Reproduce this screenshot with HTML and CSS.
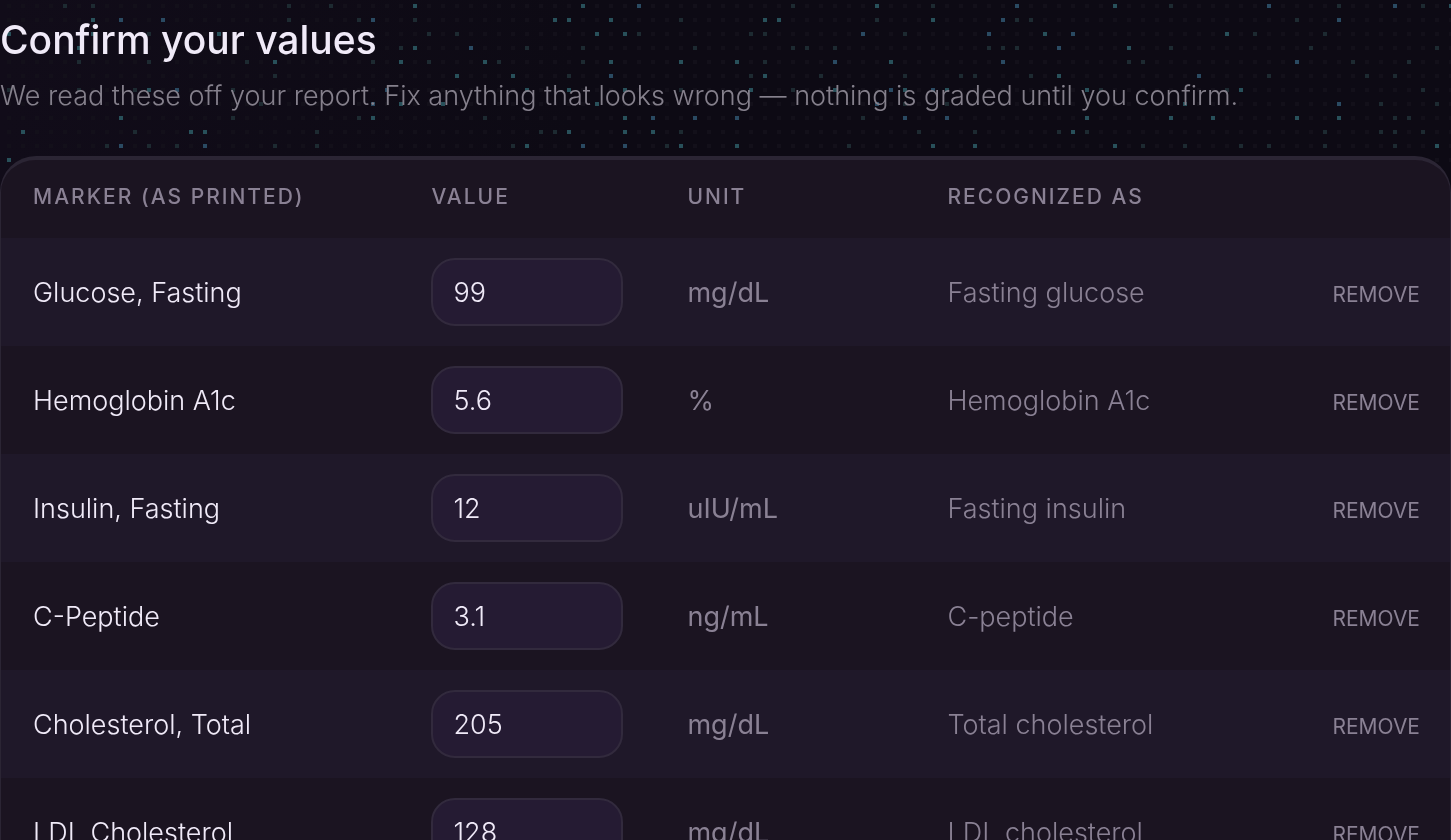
FILE: index.html
```html
<!DOCTYPE html>
<html lang="en">
<head>
    <meta charset="UTF-8">
    <meta name="viewport" content="width=device-width, initial-scale=1.0">
    <title>Confirm your values</title>
    <link rel="stylesheet" href="styles.css">
</head>
<body>
    <canvas class="dots" id="dots" aria-hidden="true"></canvas>

    <main class="page">
        <header class="intro">
            <h1>Confirm your values</h1>
            <p>We read these off your report. Fix anything that looks wrong — nothing is graded until you confirm.</p>
        </header>

        <div class="card">
            <table class="values">
                <thead>
                    <tr>
                        <th class="col-marker" scope="col">Marker (as printed)</th>
                        <th class="col-value" scope="col">Value</th>
                        <th class="col-unit" scope="col">Unit</th>
                        <th scope="col">Recognized as</th>
                        <td class="col-action"></td>
                    </tr>
                </thead>
                <tbody>
                    <tr>
                        <td><label for="glucose">Glucose, Fasting</label></td>
                        <td><input type="text" id="glucose" value="99"></td>
                        <td class="unit">mg/dL</td>
                        <td class="known">Fasting glucose</td>
                        <td class="action"><button type="button">Remove</button></td>
                    </tr>
                    <tr>
                        <td><label for="a1c">Hemoglobin A1c</label></td>
                        <td><input type="text" id="a1c" value="5.6"></td>
                        <td class="unit">%</td>
                        <td class="known">Hemoglobin A1c</td>
                        <td class="action"><button type="button">Remove</button></td>
                    </tr>
                    <tr>
                        <td><label for="insulin">Insulin, Fasting</label></td>
                        <td><input type="text" id="insulin" value="12"></td>
                        <td class="unit">uIU/mL</td>
                        <td class="known">Fasting insulin</td>
                        <td class="action"><button type="button">Remove</button></td>
                    </tr>
                    <tr>
                        <td><label for="cpeptide">C-Peptide</label></td>
                        <td><input type="text" id="cpeptide" value="3.1"></td>
                        <td class="unit">ng/mL</td>
                        <td class="known">C-peptide</td>
                        <td class="action"><button type="button">Remove</button></td>
                    </tr>
                    <tr>
                        <td><label for="cholesterol">Cholesterol, Total</label></td>
                        <td><input type="text" id="cholesterol" value="205"></td>
                        <td class="unit">mg/dL</td>
                        <td class="known">Total cholesterol</td>
                        <td class="action"><button type="button">Remove</button></td>
                    </tr>
                    <tr>
                        <td><label for="ldl">LDL Cholesterol</label></td>
                        <td><input type="text" id="ldl" value="128"></td>
                        <td class="unit">mg/dL</td>
                        <td class="known">LDL cholesterol</td>
                        <td class="action"><button type="button">Remove</button></td>
                    </tr>
                </tbody>
            </table>
        </div>
    </main>

    <script src="script.js"></script>
</body>
</html>
```

FILE: styles.css
```css
* {
    box-sizing: border-box;
}
body {
    margin: 0;
    background: linear-gradient(90deg, #110c19, #0d0a14 40%);
    color: #f0eaf8;
    font-family: Inter, sans-serif;
    font-size: 27px;
    font-weight: 300;
}
.dots {
    position: absolute;
    top: 0;
    left: 0;
    z-index: -1;
}
.page {
    height: 100vh;
    overflow: hidden;
}
.intro {
    padding: 16px 0 40px;
}
h1 {
    margin: 0;
    font-size: 39px;
    font-weight: 500;
    line-height: 48px;
}
.intro p {
    margin: 12px 0 0;
    color: #85808c;
    line-height: 40px;
}
.card {
    border: 1px solid #2b2534;
    border-top-width: 4px;
    border-radius: 36px 36px 0 0;
    background: #1b1421;
    overflow: hidden;
}
.values {
    width: 100%;
    border-collapse: collapse;
    table-layout: fixed;
}
.values th,
.values td {
    padding: 0 0 0 32px;
    text-align: left;
    white-space: nowrap;
}
.values th {
    height: 78px;
    padding-bottom: 6px;
    color: #8a8194;
    font-size: 21px;
    font-weight: 500;
    letter-spacing: 2px;
    text-transform: uppercase;
}
.col-marker {
    width: 27.5%;
}
.col-value {
    width: 256px;
}
.col-unit {
    width: 260px;
}
.col-action {
    width: 160px;
}
tbody tr {
    height: 108px;
}
tbody tr:nth-child(odd) {
    background: #1f1829;
}
.values input {
    display: block;
    width: 192px;
    height: 68px;
    padding: 0 20px;
    border: 2px solid #322a3d;
    border-radius: 24px;
    background: #251b33;
    color: inherit;
    font: inherit;
}
.unit,
.known {
    color: #8a8194;
}
.unit {
    font-weight: 400;
}
.values .action {
    padding: 0 30px 0 0;
    text-align: right;
}
.action button {
    padding: 0;
    border: 0;
    background: none;
    color: #8a8194;
    font: inherit;
    font-size: 21px;
    font-weight: 400;
    text-transform: uppercase;
    cursor: pointer;
}
```

FILE: script.js
```js
const canvas = document.getElementById('dots');
const ctx = canvas.getContext('2d');
const PITCH = 14;
const SIZE = 4;

// lit columns for each row of the dot field
const bright = [
    [29, 41, 45, 62, 72, 79, 90, 99, 103],
    [6, 8, 11, 26, 39, 40, 43, 54, 55, 66, 71, 95],
    [0, 6, 15, 42, 44, 61, 70, 74, 76, 87],
    [5, 29, 33, 75, 80],
    [19, 28, 34, 43, 48, 52, 59, 63, 71, 92],
    [32, 36, 43, 54, 75, 85],
    [10, 12, 27, 37, 40, 44, 53, 59, 63, 64, 66, 67, 77, 88],
    [26, 28, 31, 42, 62, 84, 95],
    [8, 26, 44, 46, 49, 52, 64, 67, 77, 83, 86, 92, 95],
    [1, 13, 14, 40, 44, 46, 76],
    [8, 14, 37, 41, 44, 48, 52, 66, 69, 79, 102],
    [0]
];
const dim = [
    [4, 6, 20, 23, 56, 66, 83, 95, 101],
    [20, 25, 29, 48, 62, 72, 73, 92],
    [10, 30, 32, 45, 53, 54, 64, 89, 94],
    [28, 37, 41, 49, 56, 57, 59, 70, 71, 72, 83, 93, 102],
    [5, 10, 17, 26, 30, 35, 41, 54, 80, 81, 96, 100],
    [19, 40, 53, 58, 64, 68, 69, 73, 90, 97, 99],
    [0, 5, 9, 16, 48, 56, 78, 87, 101],
    [18, 64, 67, 98, 102],
    [16, 25, 34, 61, 99, 100],
    [9, 22, 38, 39, 48, 65, 69, 75, 77, 94, 98, 99, 101],
    [7, 10, 12, 19, 22, 36, 47, 60, 81, 84, 88, 90, 94, 99],
    []
];

function drawDots() {
    canvas.width = window.innerWidth;
    canvas.height = bright.length * PITCH;
    for (let row = 0; row < bright.length; row++) {
        for (let col = 0; 7 + col * PITCH < canvas.width; col++) {
            ctx.fillStyle = '#13101a';
            if (dim[row].includes(col)) {
                ctx.fillStyle = '#1d2a31';
            }
            if (bright[row].includes(col)) {
                ctx.fillStyle = (row + col) % 3 ? '#28505a' : '#2a4a62';
            }
            ctx.fillRect(7 + col * PITCH, 4 + row * PITCH, SIZE, SIZE);
        }
    }
}

drawDots();
window.addEventListener('resize', drawDots);
```
